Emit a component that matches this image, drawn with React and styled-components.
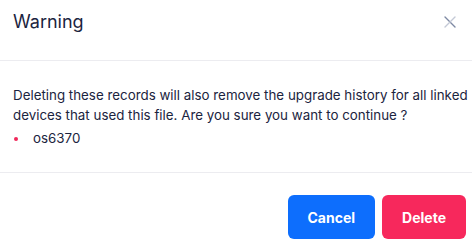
import styled, { createGlobalStyle } from "styled-components";

const GlobalStyle = createGlobalStyle`
  body {
    margin: 0;
    background: #ffffff;
    font-family: Inter, "Noto Sans", sans-serif;
  }
`;

export default function App() {
  return (
    <>
      <GlobalStyle />
      <Modal>
        <Header>
          <Title>Warning</Title>
          <CloseButton aria-label="Close">
            <svg width="12" height="12" viewBox="0 0 12 12">
              <path d="M1 1 L11 11" stroke="#7d89a3" strokeWidth="1.4" strokeLinecap="round" />
              <path d="M11 1 L1 11" stroke="#c3c9d6" strokeWidth="1.4" strokeLinecap="round" />
            </svg>
          </CloseButton>
        </Header>
        <Body>
          <Message>
            Deleting these records will also remove the upgrade history for all
            linked devices that used this file. Are you sure you want to
            continue ?
          </Message>
          <List>
            <Item>os6370</Item>
          </List>
        </Body>
        <Footer>
          <Button $color="#0d6efd">Cancel</Button>
          <Button $color="#f7285c">Delete</Button>
        </Footer>
      </Modal>
    </>
  );
}

const Modal = styled.div`
  width: 473px;
  height: 248px;
  background: #ffffff;
  color: #1b2440;
  overflow: hidden;
`;

const Header = styled.div`
  height: 61px;
  display: flex;
  align-items: flex-start;
  justify-content: space-between;
  padding: 10px 16px 0 13px;
  box-sizing: border-box;
  border-bottom: 1px solid #ececf0;
  margin-right: 1px;
`;

const Title = styled.h2`
  margin: 0;
  font-size: 18px;
  font-weight: 400;
  line-height: 24px;
  color: #1b2440;
`;

const CloseButton = styled.button`
  border: 0;
  background: none;
  padding: 0;
  margin-top: 6px;
  width: 12px;
  height: 12px;
  display: flex;
  cursor: pointer;
`;

const Body = styled.div`
  height: 112px;
  box-sizing: border-box;
  padding: 25px 4px 0 13px;
  border-bottom: 1px solid #ececf0;
  margin-right: 1px;
`;

const Message = styled.p`
  margin: 0;
  font-size: 13.35px;
  line-height: 19.5px;
`;

const List = styled.ul`
  margin: 4px 0 0;
  padding: 0;
  list-style: none;
`;

const Item = styled.li`
  position: relative;
  padding-left: 20px;
  font-size: 13.35px;
  line-height: 19px;

  &::before {
    content: "";
    position: absolute;
    left: 1px;
    top: 8px;
    width: 4px;
    height: 4px;
    border-radius: 50%;
    background: #f0285a;
  }
`;

const Footer = styled.div`
  display: flex;
  justify-content: flex-end;
  gap: 7px;
  padding: 22px 7px 0;
`;

const Button = styled.button`
  height: 44px;
  padding: 0 20px;
  border: 0;
  border-radius: 6px;
  background: ${(p) => p.$color};
  color: #ffffff;
  font-family: Inter, "Noto Sans", sans-serif;
  font-size: 14px;
  font-weight: 700;
  cursor: pointer;
`;
